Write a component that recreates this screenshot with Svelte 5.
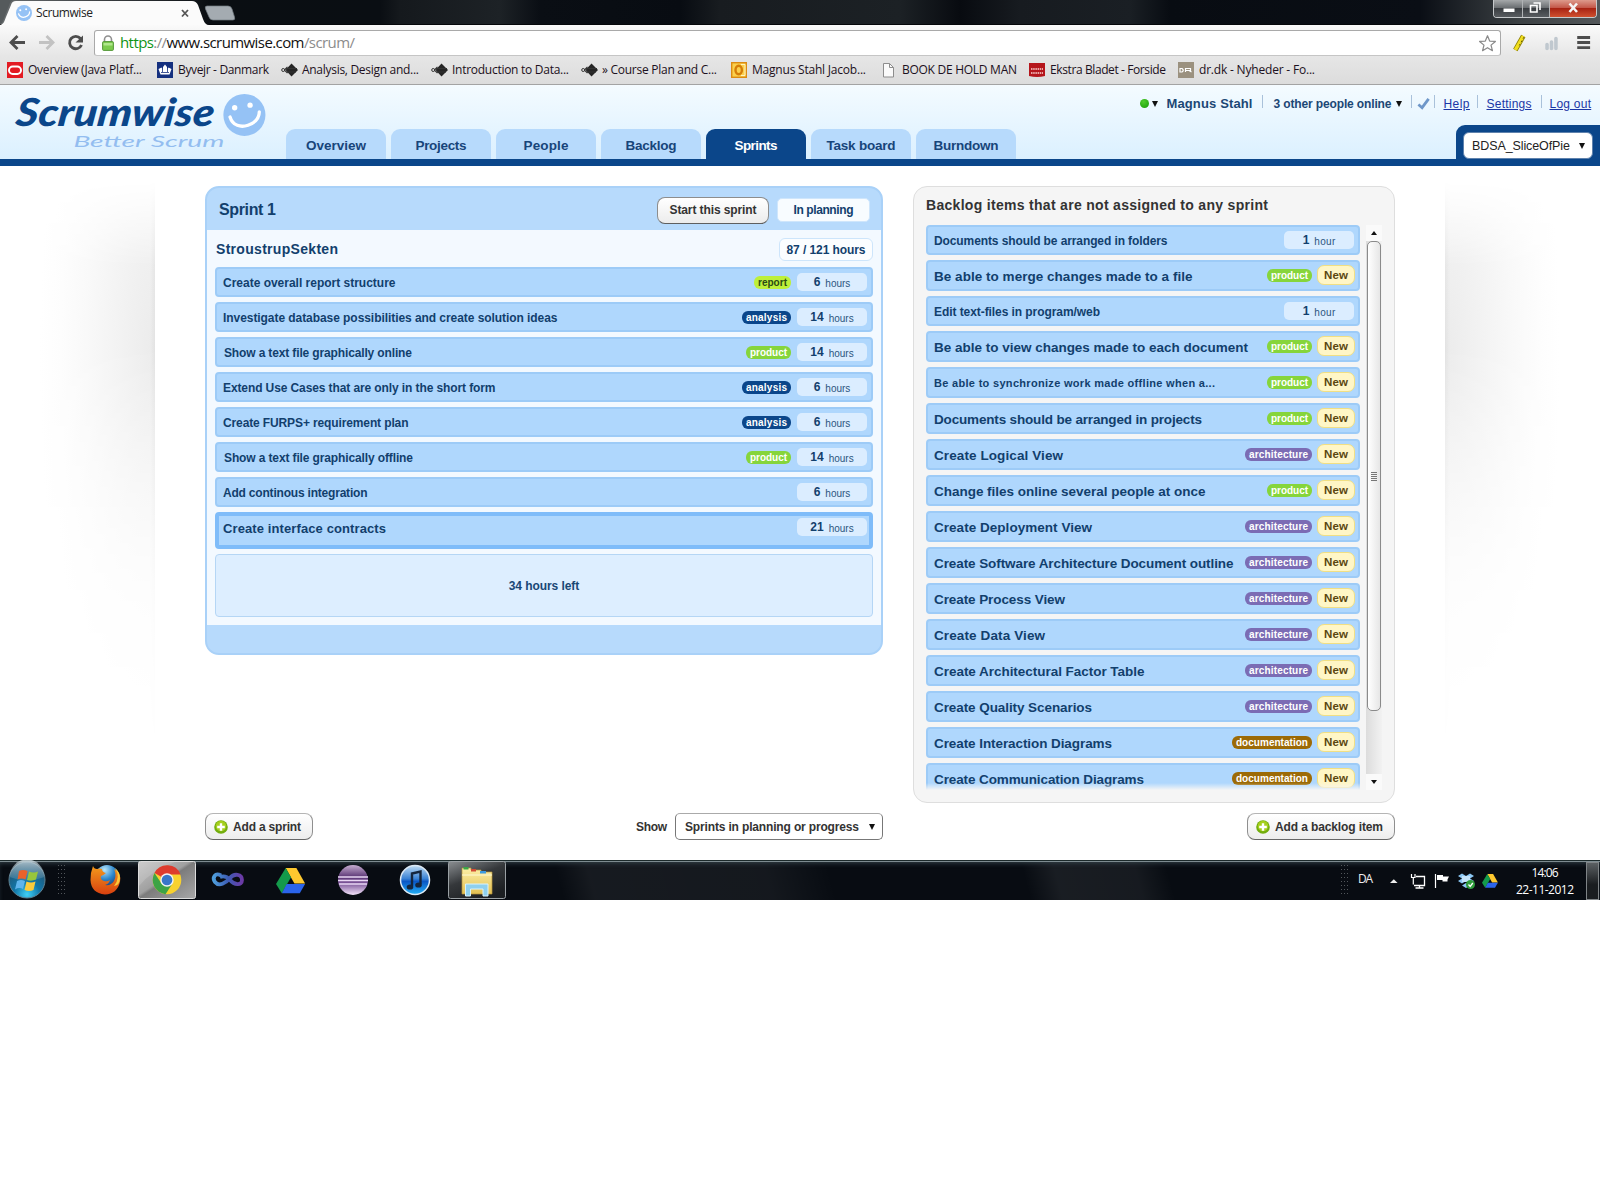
<script>
  // Spreads the letters of a label so that it fills the given width.
  function fit(node, width) {
    const natural = node.getBoundingClientRect().width;
    const gaps = Math.max(1, node.textContent.length - 1);
    const spacing = (width - natural) / gaps;
    node.style.letterSpacing = spacing.toFixed(3) + 'px';
    node.style.marginRight = (-spacing).toFixed(3) + 'px';
  }

  const bookmarks = [
    { icon: 'oracle', label: 'Overview (Java Platf...', w: 114, cell: 150 },
    { icon: 'crown', label: 'Byvejr - Danmark', w: 91, cell: 124 },
    { icon: 'diamond', label: 'Analysis, Design and...', w: 117, cell: 150 },
    { icon: 'diamond', label: 'Introduction to Data...', w: 117, cell: 150 },
    { icon: 'diamond', label: '» Course Plan and C...', w: 115, cell: 150 },
    { icon: 'outlook', label: 'Magnus Stahl Jacob...', w: 114, cell: 150 },
    { icon: 'page', label: 'BOOK DE HOLD MAN', w: 115, cell: 148 },
    { icon: 'ekstra', label: 'Ekstra Bladet - Forside', w: 116, cell: 149 },
    { icon: 'dr', label: 'dr.dk - Nyheder - Fo...', w: 116, cell: 150 }
  ];

  const tabs = [
    { label: 'Overview', w: 60 },
    { label: 'Projects', w: 51 },
    { label: 'People', w: 45 },
    { label: 'Backlog', w: 51 },
    { label: 'Sprints', w: 43, active: true },
    { label: 'Task board', w: 69 },
    { label: 'Burndown', w: 65 }
  ];

  const sprintItems = [
    { title: 'Create overall report structure', w: 172.5, tag: 'report', hours: 6 },
    { title: 'Investigate database possibilities and create solution ideas', w: 334.5, tag: 'analysis', hours: 14 },
    { title: 'Show a text file graphically online', w: 188, tag: 'product', hours: 14, inset: true },
    { title: 'Extend Use Cases that are only in the short form', w: 272.5, tag: 'analysis', hours: 6 },
    { title: 'Create FURPS+ requirement plan', w: 185.5, tag: 'analysis', hours: 6 },
    { title: 'Show a text file graphically offline', w: 189, tag: 'product', hours: 14, inset: true },
    { title: 'Add continous integration', w: 144.5, hours: 6 },
    { title: 'Create interface contracts', w: 163, hours: 21, selected: true }
  ];

  const backlog = [
    { title: 'Documents should be arranged in folders', w: 233.5, hours: 1 },
    { title: 'Be able to merge changes made to a file', w: 258.5, tag: 'product' },
    { title: 'Edit text-files in program/web', w: 166, hours: 1 },
    { title: 'Be able to view changes made to each document', w: 314, tag: 'product' },
    { title: 'Be able to synchronize work made offline when a...', w: 281, tag: 'product', small: true },
    { title: 'Documents should be arranged in projects', w: 268, tag: 'product' },
    { title: 'Create Logical View', w: 129, tag: 'architecture' },
    { title: 'Change files online several people at once', w: 271.5, tag: 'product' },
    { title: 'Create Deployment View', w: 158, tag: 'architecture' },
    { title: 'Create Software Architecture Document outline', w: 299.5, tag: 'architecture' },
    { title: 'Create Process View', w: 131, tag: 'architecture' },
    { title: 'Create Data View', w: 111, tag: 'architecture' },
    { title: 'Create Architectural Factor Table', w: 210.5, tag: 'architecture' },
    { title: 'Create Quality Scenarios', w: 158, tag: 'architecture' },
    { title: 'Create Interaction Diagrams', w: 178, tag: 'documentation' },
    { title: 'Create Communication Diagrams', w: 210, tag: 'documentation' }
  ];

  const tagWidth = { report: 29, analysis: 41, product: 37, architecture: 59, documentation: 72 };
</script>

{#snippet smile()}
  <circle cx="20.5" cy="20.5" r="20.5" fill="#95c2f5" />
  <circle cx="11" cy="13.5" r="2.6" fill="#fff" />
  <circle cx="26" cy="11" r="2.6" fill="#fff" />
  <path d="M6.500 22.500C9 31 17 33 24 30.500C31 28 35 24 35 17.500" fill="none" stroke="#fff" stroke-width="3.200" stroke-linecap="round" />
{/snippet}

{#snippet drive()}
  <path d="M10 1h11l9 16H19z" fill="#fdc82f" />
  <path d="M10 1l5.500 9.500L6 27 0 17.500z" fill="#149a4b" />
  <path d="M11 17.500h19L24.500 27H6z" fill="#2b64ea" />
{/snippet}

{#snippet plus()}
  <svg class="plus" viewBox="0 0 14 14">
    <circle cx="7" cy="7" r="6.800" fill="#72ad0e" />
    <circle cx="7" cy="6" r="5.300" fill="#a5cf1c" />
    <path d="M7 3.200v7.600M3.200 7h7.600" stroke="#fff" stroke-width="2.400" />
  </svg>
{/snippet}

{#snippet hours(n)}
  <span class="hours"><b>{n}</b><span use:fit={n === 1 ? 21 : 25}>{n === 1 ? 'hour' : 'hours'}</span></span>
{/snippet}

{#snippet tag(name)}
  <span class="tag {name}"><span use:fit={tagWidth[name]}>{name}</span></span>
{/snippet}

<div class="screen">
  <div class="titlebar">
    <svg class="tabshape" viewBox="0 0 240 25">
      <path d="M0 0H16C10 0 10 3 8 8L3 21Q2 24 0 24Z" fill="#555a5c" />
      <path d="M0 25C4 24 4 22 6 17L11 5Q12 1 16 1H192Q196 1 198 5L203 19Q205 25 209 25Z" fill="#fbfbfb" />
      <path d="M207 6H228Q231 6 232 9L234.500 17Q235.500 20 233 20H213Q210 20 209 17L205.500 9Q204.500 6 207 6Z" fill="#a4abb1" stroke="#737b82" stroke-width=".7" />
      <g transform="translate(16 5) scale(.39)">{@render smile()}</g>
      <path d="M182 10l6 6.500M188 10l-6 6.500" stroke="#555" stroke-width="1.800" />
    </svg>
    <span class="tabtitle"><span use:fit={57}>Scrumwise</span></span>
    <div class="winbuttons">
      <span class="wb min"><svg viewBox="0 0 28 17"><rect x="9.500" y="8.500" width="11" height="3.500" fill="#fff" /></svg></span>
      <span class="wb max"><svg viewBox="0 0 26 17"><path d="M10.500 3h6.500v7M7.500 5.500h6.500v6.500H7.500z" fill="none" stroke="#fff" stroke-width="1.600" /></svg></span>
      <span class="wb close"><svg viewBox="0 0 46 17"><path d="M19.500 3.500l7.500 8.500M27 3.500l-7.500 8.500" stroke="#f4f4f4" stroke-width="2.600" /></svg></span>
    </div>
  </div>

  <div class="toolbar">
    <svg class="nav" viewBox="0 0 94 32">
      <g fill="none" stroke-width="2.800">
        <path d="M25 17.500H11.500M17.500 11l-6.500 6.500 6.500 6.500" stroke="#4d4d4d" />
        <path d="M39 17.500H52.500M46.500 11l6.500 6.500-6.500 6.500" stroke="#c2c2c2" />
        <path d="M80.500 13.500A6.200 6.200 0 1 0 81.500 20" stroke="#4d4d4d" />
      </g>
      <path d="M83 10.500v7h-7.500z" fill="#4d4d4d" />
    </svg>
    <div class="url">
      <svg class="lock" viewBox="0 0 12 16">
        <path d="M2.500 8V4.500a3.500 3.500 0 0 1 7 0V8" fill="none" stroke="#8f8f8f" stroke-width="1.600" />
        <rect x=".6" y="6.600" width="10.800" height="8.800" rx="1" fill="#7ccb4e" stroke="#55973a" />
        <path d="M1.500 8h9v2.500h-9z" fill="#b1e68d" />
      </svg>
      <span class="address" use:fit={235}><i class="scheme">https</i><i class="dim">://</i>www.scrumwise.com<i class="dim">/scrum/</i></span>
      <svg class="star" viewBox="0 0 20 20"><path d="M10 1.800l2.300 5.600 6 .4-4.600 3.900 1.500 5.900L10 14.400l-5.200 3.200 1.500-5.900L1.700 7.800l6-.4z" fill="#fff" stroke="#8a8a8a" stroke-width="1.300" stroke-linejoin="round" /></svg>
    </div>
    <svg class="ext" viewBox="0 0 100 32">
      <path d="M22.500 11L14.500 25" stroke="#8a7c00" stroke-width="5" />
      <path d="M22.500 11L14.500 25" stroke="#f2df1f" stroke-width="3.400" />
      <path d="M23.300 12L18.500 20.500" stroke="#5e5708" stroke-width="1" stroke-dasharray="2 2" />
      <path d="M46.500 23.500v-4M51 23.500v-6.500M55.500 23.500v-10" stroke="#c0c8cf" stroke-width="3.600" stroke-linecap="round" />
      <path d="M77 12.500h13M77 17.600h13M77 22.700h13" stroke="#4d4d4d" stroke-width="3" />
    </svg>
  </div>

  <div class="bookmarks">
    {#each bookmarks as b}
      <div class="bookmark" style:width="{b.cell}px">
        <svg viewBox="0 0 16 16">
          {#if b.icon === 'oracle'}
            <rect width="16" height="16" fill="#e31b23" /><rect x="2" y="4.500" width="12" height="7.500" rx="3.700" fill="none" stroke="#fff" stroke-width="2" />
          {:else if b.icon === 'crown'}
            <rect width="16" height="16" fill="#15307f" /><path d="M3.500 12.500L1.500 7l3-1.500L6 8V5l2-2.500L10 5v3l1.500-2.500 3 1.500-2 5.500z" fill="#fff" /><path d="M4 10.500h8M5.500 7v3M10.500 7v3" stroke="#15307f" stroke-width=".8" />
          {:else if b.icon === 'diamond'}
            <path d="M10.500 1.500L17 8l-6.500 6.500L4.500 8z" fill="#252525" /><circle cx="2.200" cy="8" r="1.500" fill="none" stroke="#333" /><path d="M3.500 8l3-3.200M3.500 8l3 3.200M5 6.500h11M6 10h9" stroke="#333" stroke-width="1.200" />
          {:else if b.icon === 'outlook'}
            <rect x=".7" y=".7" width="14.600" height="14.600" fill="#fbd04c" stroke="#dc8b12" stroke-width="1.400" /><path d="M10 2.500h4v11h-4" fill="none" stroke="#fff3c0" /><ellipse cx="7.700" cy="8" rx="3.200" ry="4.200" fill="none" stroke="#d57d09" stroke-width="2.400" />
          {:else if b.icon === 'page'}
            <path d="M2.500 1.500h6l4 4v9.500h-10z" fill="#fafafa" stroke="#8d8d8d" /><path d="M8.500 1.500v4h4" fill="none" stroke="#8d8d8d" />
          {:else if b.icon === 'ekstra'}
            <path d="M0 1h16v13Q8 16 0 14z" fill="#b5161c" /><path d="M2 7h12M2 11h12" stroke="#eaa6a6" stroke-width="2" stroke-dasharray="1.500 .7" />
          {:else}
            <rect width="16" height="16" fill="#9b917f" /><path d="M2 6.500h2q2.500 1.700 0 3.500H2zM7.500 10V6.500h5v2h-5M11 8.500l2.500 1.500" fill="none" stroke="#fff" stroke-width="1.200" />
          {/if}
        </svg>
        <span use:fit={b.w}>{b.label}</span>
      </div>
    {/each}
  </div>

  <header>
    <svg class="logo" viewBox="0 0 280 75">
      <text class="brand" transform="translate(12.500 42) skewX(-7)" textLength="201" lengthAdjust="spacingAndGlyphs">Scrumwise</text>
      <text class="tagline" x="72" y="63" textLength="153" lengthAdjust="spacingAndGlyphs">Better Scrum</text>
      <g transform="translate(224 9) scale(1.040)">{@render smile()}</g>
    </svg>
    <nav>
      {#each tabs as t}
        <a class="tab" class:active={t.active}><span use:fit={t.w}>{t.label}</span></a>
      {/each}
    </nav>
    <div class="account">
      <div class="links">
        <i class="dot"></i><i class="caret"></i>
        <b class="user"><span use:fit={86}>Magnus Stahl</span></b>
        <i class="sep s1"></i>
        <b class="online"><span use:fit={118}>3 other people online</span></b>
        <i class="caret c2"></i>
        <i class="sep s2"></i>
        <svg class="check" viewBox="0 0 14 14"><path d="M1.500 8l4 3.500L12.500 2" fill="none" stroke="#6f97c9" stroke-width="3" /></svg>
        <i class="sep s3"></i>
        <u class="help"><span use:fit={26}>Help</span></u>
        <i class="sep s4"></i>
        <u class="settings"><span use:fit={45}>Settings</span></u>
        <i class="sep s5"></i>
        <u><span use:fit={41.5}>Log out</span></u>
      </div>
      <div class="project"><div class="projectbox"><span use:fit={98}>BDSA_SliceOfPie</span><i class="caret"></i></div></div>
    </div>
  </header>

  <main>
    <div class="shade left"></div>
    <div class="content">
      <div class="column sprintcol">
        <section class="sprint">
          <div class="sprinthead">
            <h2><span use:fit={57}>Sprint 1</span></h2>
            <button class="start"><span use:fit={87}>Start this sprint</span></button>
            <span class="status"><span use:fit={60}>In planning</span></span>
          </div>
          <div class="sprintbody">
            <div class="team">
              <h3><span use:fit={122}>StroustrupSekten</span></h3>
              <span class="total"><span use:fit={79}>87 / 121 hours</span></span>
            </div>
            {#each sprintItems as it}
              <div class="item" class:selected={it.selected} class:inset={it.inset}>
                <span class="title"><span use:fit={it.w}>{it.title}</span></span>
                {#if it.tag}{@render tag(it.tag)}{/if}
                {@render hours(it.hours)}
              </div>
            {/each}
            <div class="remaining"><span use:fit={70.5}>34 hours left</span></div>
          </div>
          <div class="sprintfoot"></div>
        </section>
        <div class="actions">
          <button class="add">{@render plus()}<span use:fit={68}>Add a sprint</span></button>
          <span class="show"><span use:fit={31}>Show</span></span>
          <div class="select"><span use:fit={174}>Sprints in planning or progress</span><i class="caret"></i></div>
        </div>
      </div>

      <div class="column backlogcol">
        <section class="backlog">
          <h3><span use:fit={342}>Backlog items that are not assigned to any sprint</span></h3>
          <div class="scroller">
            <div class="list">
              {#each backlog as it}
                <div class="item" class:fresh={!it.hours} class:small={it.small}>
                  <span class="title"><span use:fit={it.w}>{it.title}</span></span>
                  {#if it.tag}{@render tag(it.tag)}{/if}
                  {#if it.hours}{@render hours(it.hours)}{:else}<span class="new"><span use:fit={24}>New</span></span>{/if}
                </div>
              {/each}
              <div class="fade"></div>
            </div>
            <div class="scrollbar">
              <span class="arrow"><i class="up"></i></span>
              <span class="track"><span class="thumb"><i></i><i></i><i></i><i></i><i></i></span></span>
              <span class="arrow"><i class="caret"></i></span>
            </div>
          </div>
        </section>
        <div class="actions end">
          <button class="add">{@render plus()}<span use:fit={108}>Add a backlog item</span></button>
        </div>
      </div>
    </div>
    <div class="shade right"></div>
  </main>

  <footer>
    <svg class="apps" viewBox="0 0 520 40">
      <defs>
        <radialGradient id="orb" cx=".5" cy=".9" r=".8"><stop offset="0" stop-color="#3fd0f5" /><stop offset=".45" stop-color="#1176a8" /><stop offset="1" stop-color="#24536f" /></radialGradient>
        <linearGradient id="shine" x2="0" y2="1"><stop offset="0" stop-color="#d5e2e8" stop-opacity=".8" /><stop offset="1" stop-color="#9fc0d0" stop-opacity=".15" /></linearGradient>
        <linearGradient id="btn" x2="1" y2="1"><stop offset="0" stop-color="#c4c4c4" /><stop offset=".45" stop-color="#a0a0a0" /><stop offset=".5" stop-color="#7c7c7c" /><stop offset="1" stop-color="#a8a8a8" /></linearGradient>
        <linearGradient id="btn2" x2=".6" y2="1"><stop offset="0" stop-color="#8b8f92" /><stop offset=".5" stop-color="#35383b" /><stop offset="1" stop-color="#1c1f22" /></linearGradient>
        <linearGradient id="fox" x2="0" y2="1"><stop offset="0" stop-color="#f39a1c" /><stop offset="1" stop-color="#d8400f" /></linearGradient>
        <radialGradient id="globe" cx=".4" cy=".2" r=".8"><stop offset="0" stop-color="#b7e6fb" /><stop offset=".5" stop-color="#2b86cb" /><stop offset="1" stop-color="#12316f" /></radialGradient>
        <linearGradient id="inf"><stop offset="0" stop-color="#4e9ddb" /><stop offset=".5" stop-color="#3c5cb4" /><stop offset="1" stop-color="#6b3aa5" /></linearGradient>
        <linearGradient id="ecl" x2="0" y2="1"><stop offset="0" stop-color="#c6add0" /><stop offset=".4" stop-color="#5b3675" /><stop offset=".6" stop-color="#7b5498" /><stop offset="1" stop-color="#f3e4fa" /></linearGradient>
        <linearGradient id="tunes" x2="0" y2="1"><stop offset="0" stop-color="#bfdcf3" /><stop offset=".45" stop-color="#3b83d5" /><stop offset=".55" stop-color="#0a57c6" /><stop offset="1" stop-color="#23b0f5" /></linearGradient>
        <linearGradient id="folder" x2="0" y2="1"><stop offset="0" stop-color="#fdf0a8" /><stop offset="1" stop-color="#e3c052" /></linearGradient>
      </defs>
      <circle cx="27" cy="20" r="18" fill="url(#orb)" stroke="#5f8292" />
      <path d="M9.500 17A17.500 17.500 0 0 1 44.500 17Q27 24 9.500 17Z" fill="url(#shine)" />
      <path d="M19 11q4-2 8.500 0l-2 8.500q-4-2-8 0z" fill="#e9622a" />
      <path d="M29 11.500q4.500 2 9 0l-2 8q-4.500 2-9 .5z" fill="#97c63c" />
      <path d="M17 21q4-2 8 0l-2 8q-4-2-8 .5z" fill="#5fb4ec" />
      <path d="M26.500 21.500q4.500 2 9 0l-2 8.500q-4.500 2-9 0z" fill="#fbcb3b" />
      <path d="M58.500 5v30M61.500 5v30M64.500 5v30" stroke="#51565a" stroke-dasharray="1 3" />

      <circle cx="107" cy="17" r="12" fill="url(#globe)" />
      <path d="M93 6q1 3 4 3 3-1 5 0 0 3 4 4-2 2-5 3-1 4 3 5 3 1 6-1-1 4-5 5 6 1 9-4 3-6 0-12 8 5 6 13Q117 34 105 34.500 91 33 90.500 20 90.500 12 93 6Z" fill="url(#fox)" />
      <path d="M115 8q6 9-1 18 6-1 6-8 0-6-5-10z" fill="#fbc93a" />

      <rect x="138.500" y="1.500" width="57" height="37" rx="2" fill="url(#btn)" stroke="#dcdcdc" />
      <path d="M139 26Q152 10 175 2H139z" fill="#fff" opacity=".15" />
      <circle cx="167" cy="20" r="14.300" fill="#f8d12f" />
      <path d="M167 20L154.500 13A14.300 14.300 0 0 1 180.500 14.500H167z" fill="#dd3b2e" />
      <path d="M154.500 13A14.300 14.300 0 0 0 165.500 34.200L172.500 23.500 161.500 23.500z" fill="#3da345" />
      <circle cx="167" cy="20" r="6.700" fill="#f3f3f3" /><circle cx="167" cy="20" r="5.300" fill="#3876c8" />

      <path d="M221 15.500C215 12 212 18 215 22C219 27 226 23 230 18C234 13 242 14 242 20C242 26 234 25 230 20Q226 15 220 17" fill="none" stroke="url(#inf)" stroke-width="3.800" />

      <g transform="translate(276 7) scale(.97)">{@render drive()}</g>

      <circle cx="353" cy="20" r="15" fill="url(#ecl)" /><path d="M338 17h30M338 20.500h30M339 24h28" stroke="#e9d8f3" stroke-width="1.300" />

      <circle cx="415" cy="20" r="14.500" fill="url(#tunes)" stroke="#dce9f4" stroke-width="1.500" />
      <path d="M412 26V13.500l8.500-2V24" fill="none" stroke="#15253c" stroke-width="2.400" /><ellipse cx="410" cy="27" rx="3.300" ry="2.600" fill="#15253c" /><ellipse cx="418.500" cy="25" rx="3.300" ry="2.600" fill="#15253c" />

      <rect x="448.500" y="1.500" width="57" height="37" rx="2" fill="url(#btn2)" stroke="#9aa0a4" />
      <path d="M462 11V8h9v2h10v2h11v22h-30z" fill="url(#folder)" stroke="#b4923a" stroke-width=".7" />
      <rect x="463.500" y="7" width="5" height="2.500" fill="#3aa648" /><rect x="471" y="9" width="5" height="2.500" fill="#d24b35" /><rect x="480" y="11" width="6" height="2.500" fill="#3d9be0" />
      <path d="M462 15h30" stroke="#fff9d4" />
      <path d="M465.500 36V24h22.500v12h-5v-7h-12.500v7z" fill="#8fd0ee" stroke="#d9f3fd" />
    </svg>
    <div class="tray">
      <svg class="trayicons" viewBox="0 0 160 40">
        <path d="M1.500 5v30M4.500 5v30M7.500 5v30" stroke="#51565a" stroke-dasharray="1 3" />
        <path d="M50 23l3.800-3.800L57.600 23z" fill="#eee" />
        <path d="M76 16.500h8.500v9h-10.500M79.500 26v2M75.500 28h8" fill="none" stroke="#fff" stroke-width="1.300" />
        <path d="M71.500 14v3.500h3.500V14M73.300 17.500v7" fill="none" stroke="#fff" stroke-width="1.200" />
        <path d="M95.500 14v14" stroke="#fff" stroke-width="1.200" /><path d="M97 15h6v1.500h6l-1.500 3v2h-5V20H97z" fill="#fff" />
        <path d="M122 13.500l4 2.500-4 2.500-4-2.500zM130 13.500l4 2.500-4 2.500-4-2.500zM122 18.500l4 2.500-4 2.500-4-2.500zM130 18.500l4 2.500-4 2.500-4-2.500zM126 23l4 2.500-4 2.500-4-2.500z" fill="#8cc8f5" />
        <path d="M122 16h8v6h-8z" fill="#c4e4fb" />
        <circle cx="130.500" cy="24.500" r="4.500" fill="#2f9e3c" /><path d="M128.500 24.500l1.700 2 2.600-3.500" fill="none" stroke="#fff" stroke-width="1.300" />
        <g transform="translate(142 13.500) scale(.53)">{@render drive()}</g>
      </svg>
      <span class="lang"><span use:fit={15}>DA</span></span>
      <div class="clock"><span use:fit={27}>14:06</span><span use:fit={58}>22-11-2012</span></div>
      <div class="desktop"></div>
    </div>
  </footer>
</div>

<style>
  :global(body) { background: #fff; }
  .screen { width: 1600px; height: 1195px; overflow: hidden; background: #fff; font-family: "Liberation Sans", Arial, sans-serif; font-size: 12px; color: #123f6d; }
  .screen * { box-sizing: border-box; }
  .screen :global(svg) { display: block; flex: none; }
  span, b, u { white-space: nowrap; }
  i { font-style: normal; flex: none; }
  h2, h3 { margin: 0; }
  button { font-family: inherit; }
  .caret { width: 0; height: 0; border: 3.500px solid transparent; border-top: 6px solid #111; border-bottom: 0; }

  .titlebar { height: 25px; display: flex; border-bottom: 1px solid #05070a; background: linear-gradient(90deg, #6a6e70 0, #0a0e12 210px, #0a0e13 380px, #15191d 400px, #1d2226 500px, #0a0e14 540px, #080c12 680px, #181c20 720px, #1c2125 900px, #080b10 960px, #171b20 1020px, #1a1f24 1130px, #080c12 1170px, #0a0e15 1420px, #3c4144 1520px, #53575a); }
  .tabshape { width: 240px; height: 25px; }
  .tabtitle { width: 60px; margin-left: -204px; font: 12px/26px "Open Sans", sans-serif; color: #222; }
  .winbuttons { margin-left: auto; margin-right: 3px; width: 104px; height: 18px; display: flex; border: 1px solid #c6c9cb; border-top: 0; border-radius: 0 0 4px 4px; overflow: hidden; }
  .wb { height: 17px; border-right: 1px solid #b0b3b5; background: linear-gradient(#a5a8aa, #6b6f72 45%, #3a3e42 50%, #585c60); }
  .wb svg { height: 17px; width: 100%; }
  .min { width: 29px; }
  .max { width: 27px; }
  .close { flex: 1; border: 0; background: linear-gradient(#dd9a8c, #c4584a 45%, #a82313 50%, #d0502f); }

  .toolbar { height: 31px; display: flex; background: linear-gradient(#fafafa, #e6e6e6); }
  .nav { width: 94px; height: 32px; }
  .url { width: 1407px; height: 26px; margin-top: 5px; display: flex; align-items: center; background: #fff; border: 1px solid #a9a9a9; border-bottom-color: #c5c5c5; border-radius: 3px; padding: 0 3px 0 7px; }
  .lock { width: 12px; height: 16px; margin-right: 6px; }
  .address { font: 15px/20px "Open Sans", sans-serif; color: #111; padding-bottom: 2px; }
  .scheme { color: #0f9416; }
  .dim { color: #8c8c8c; }
  .star { width: 19px; height: 19px; margin-left: auto; }
  .ext { width: 99px; height: 32px; }

  .bookmarks { height: 29px; display: flex; padding: 0 0 0 7px; background: linear-gradient(#e6e6e6, #dcdcdc); border-bottom: 1px solid #a3a3a3; }
  .bookmark { display: flex; align-items: center; flex: none; }
  .bookmark svg { width: 16px; height: 16px; margin-right: 5px; overflow: visible; }
  .bookmark span { font: 12px/28px "Open Sans", sans-serif; color: #1c1020; }

  header { height: 81px; display: flex; align-items: flex-end; border-bottom: 7px solid #0b468a; background: linear-gradient(#f4fbff, #dbf0ff); }
  .logo { width: 286px; height: 74px; padding-right: 5px; }
  .brand { font: italic 900 39px Lato, sans-serif; fill: #0b468a; }
  .tagline { font: italic 400 15px Lato, sans-serif; fill: #93bdf0; }
  nav { display: flex; gap: 5px; }
  .tab { width: 100px; height: 30px; border-radius: 9px 9px 0 0; background: #b7dafc; display: flex; justify-content: center; font: bold 13.500px/33px "Liberation Sans", Arial, sans-serif; color: #17457a; }
  .tab.active { background: #0b468a; color: #fff; }
  .account { margin-left: auto; height: 74px; display: flex; flex-direction: column; justify-content: space-between; align-items: flex-end; }
  .links { height: 37px; display: flex; align-items: center; color: #1c4775; font-size: 12px; padding-right: 9px; }
  .dot { width: 9px; height: 9px; border-radius: 50%; background: radial-gradient(circle at 40% 30%, #4ecb2c, #159b07); margin-right: 3px; }
  .user { font-size: 13px; margin-left: 8px; }
  .online { font-size: 12px; }
  .sep { width: 1px; height: 13px; background: #a9c1da; margin-top: -4px; }
  .s1 { margin: -4px 10px 0; }
  .c2 { margin: 0 9px 0 5px; }
  .check { width: 13px; height: 13px; margin: 0 4px 0 5px; }
  .s3 { margin-right: 8px; }
  .s4 { margin: -4px 8px 0 8px; }
  .s5 { margin: -4px 8px 0 9px; }
  u { color: #1b36a5; }
  .project { width: 144px; height: 34px; background: #0b468a; border-radius: 9px 0 0 0; padding: 7px; }
  .projectbox { width: 130px; height: 27px; background: #fff; border: 1px solid #5f82ad; border-radius: 6px; display: flex; align-items: center; gap: 9px; padding-left: 8px; color: #222; font-size: 12.500px; }

  main { height: 694px; display: flex; justify-content: space-between; }
  .shade { width: 155px; mask-image: linear-gradient(#0000 15px, #000 100px, #000 180px, #0008 330px, #0003 440px, #0000 600px); }
  .left { background: linear-gradient(270deg, rgba(0,0,0,.04), transparent 5px), radial-gradient(ellipse 115px 480px at 155px 190px, #ebebeb, #f2f2f2 30%, #f9f9f9 60%, #fdfdfd 82%, #fff); }
  .right { background: linear-gradient(90deg, rgba(0,0,0,.04), transparent 5px), radial-gradient(ellipse 115px 480px at 0 190px, #ebebeb, #f2f2f2 30%, #f9f9f9 60%, #fdfdfd 82%, #fff); }
  .content { width: 1190px; padding-top: 20px; display: flex; justify-content: space-between; }
  .column { height: 654px; display: flex; flex-direction: column; justify-content: space-between; }
  .sprintcol { width: 678px; }
  .backlogcol { width: 482px; }

  .sprint { height: 469px; border: 2px solid #a9d1f8; border-radius: 14px; overflow: hidden; background: #b7dafc; display: flex; flex-direction: column; }
  .sprinthead { height: 42px; display: flex; align-items: center; padding: 3px 11px 1px 12px; }
  h2 { font-size: 16px; line-height: 20px; margin-top: -1px; flex: 1; }
  .start { width: 112px; height: 27px; border: 1px solid #8d8d8d; border-bottom-color: #5f5f5f; border-radius: 8px; background: linear-gradient(#fff, #ececec); color: #333; font-weight: bold; font-size: 12px; padding: 0; }
  .status { width: 93px; height: 24px; margin-left: 8px; border-radius: 5px; background: #f8fcff; border: 1px solid #cfe6fc; font: bold 12px/23px "Liberation Sans", Arial, sans-serif; text-align: center; }
  .sprintbody { height: 395px; background: #f3f9ff; padding: 8px 8px 0; display: flex; flex-direction: column; gap: 5px; }
  .team { height: 24px; display: flex; justify-content: space-between; }
  .team h3 { font-size: 14px; line-height: 15px; padding: 4px 0 0 1px; }
  .total { width: 94px; height: 23px; border: 1px solid #cde5fb; border-radius: 6px; background: #fbfdff; font: bold 12px/22px "Liberation Sans", Arial, sans-serif; text-align: center; }

  .item { height: 30px; flex: none; background: #afd7fd; border: 2px solid #9dcbf7; border-radius: 4px; display: flex; align-items: flex-start; padding: 4px 4px 0 6px; }
  .title { flex: 1; font: bold 12px/18px "Liberation Sans", Arial, sans-serif; padding-top: 1px; }
  .inset { padding-left: 7px; }
  .selected { height: 37px; border: 4px solid #7fbcf9; padding: 2px 2px 0 4px; }
  .selected .title { font-size: 13px; padding-top: 2px; }
  .hours { width: 70px; height: 18px; margin-left: 6px; border-radius: 5px; background: #dbedff; display: flex; justify-content: center; gap: 5px; font-size: 10px; line-height: 21px; color: #2c5580; }
  .hours b { font-size: 12px; line-height: 19px; color: #123f6d; }
  .tag { height: 13px; margin-top: 3px; padding: 0 4px; border-radius: 6px; font: bold 10px/13px "Liberation Sans", Arial, sans-serif; color: #fff; }
  .report { background: #bdf03a; color: #2b4a14; }
  .analysis { background: #0b468a; }
  .product { background: #86d53b; }
  .architecture { background: #7b6cb4; }
  .documentation { background: #9c6a06; }
  .remaining { height: 63px; border: 1px solid #b5d6f5; border-radius: 4px; background: #ddeeff; display: flex; align-items: center; justify-content: center; font-weight: bold; color: #194775; }

  .actions { height: 27px; display: flex; align-items: center; }
  .end { justify-content: flex-end; }
  .add { height: 27px; display: flex; align-items: center; gap: 5px; padding: 0 11px 0 8px; border: 1px solid #8f8f8f; border-top-color: #b5b5b5; border-bottom-color: #666; border-radius: 8px; background: linear-gradient(#fff, #ededed); font-weight: bold; font-size: 12px; color: #333; }
  .add :global(.plus) { width: 14px; height: 14px; }
  .show { margin-left: auto; margin-right: 8px; font-weight: bold; color: #333; }
  .select { width: 208px; height: 27px; display: flex; align-items: center; justify-content: space-between; padding: 0 7px 0 9px; border: 1px solid #777; border-top-color: #aaa; border-radius: 5px; background: #fff; font-weight: bold; color: #333; }

  .backlog { height: 617px; border: 1px solid #dedede; border-radius: 14px; background: #f5f5f5; padding: 10px 12px 0; }
  .backlog h3 { height: 28px; font-size: 14px; line-height: 17px; color: #333; }
  .scroller { height: 565px; display: flex; justify-content: space-between; margin-right: -1px; }
  .list { width: 434px; height: 565px; overflow: hidden; display: flex; flex-direction: column; gap: 5px; position: relative; }
  .fresh { height: 31px; padding-top: 3px; }
  .fresh .title { font-size: 13.500px; padding-top: 3px; }
  .fresh.small .title { font-size: 11px; padding-top: 2px; }
  .fresh .tag { margin-top: 4px; }
  .new { width: 38px; height: 20px; margin: 0 -1px 0 5px; border: 1px solid #f1df83; border-radius: 7px; background: #fff6c6; color: #5b4711; font: bold 11.500px/19px "Liberation Sans", Arial, sans-serif; text-align: center; }
  .fade { position: absolute; left: 0; right: 0; bottom: 0; height: 7px; background: linear-gradient(rgba(245,245,245,0), #f5f5f5); }
  .scrollbar { width: 16px; margin-right: 1px; display: flex; flex-direction: column; background: #ececec; }
  .arrow { height: 16px; background: #fafafa; display: flex; align-items: center; justify-content: center; }
  .arrow .caret { border-width: 4px 3px 0; }
  .up { width: 0; height: 0; border: 3px solid transparent; border-top: 0; border-bottom: 4px solid #111; }
  .track { flex: 1; background: linear-gradient(90deg, #dcdcdc, #f2f2f2); }
  .thumb { width: 14px; height: 470px; margin-left: 1px; border: 1px solid #8a8a8a; border-radius: 5px; background: linear-gradient(90deg, #fff, #e6e6e6); display: flex; flex-direction: column; align-items: center; justify-content: center; gap: 1px; }
  .thumb i { width: 6px; height: 1px; background: #777; }

  footer { height: 40px; display: flex; justify-content: space-between; border-top: 1px solid #1c2a2b; box-shadow: inset 0 1px #7d8b90, inset 0 4px 5px -2px #34434a; background: linear-gradient(75deg, transparent 35%, rgba(255,255,255,.06) 37%, rgba(255,255,255,.05) 48%, transparent 52%, transparent 64%, rgba(255,255,255,.07) 66%, rgba(255,255,255,.06) 71%, transparent 73%), #080c12; }
  .apps { width: 520px; height: 40px; margin-top: -1px; }
  .tray { display: flex; }
  .trayicons { width: 160px; height: 40px; margin-top: -1px; }
  .lang { width: 15px; margin-left: -142px; font: 12px/36px "Open Sans", sans-serif; color: #eee; }
  .clock { width: 82px; margin-left: 131px; padding-top: 3px; display: flex; flex-direction: column; align-items: center; font: 12px/17px "Open Sans", sans-serif; color: #fff; }
  .desktop { width: 13px; height: 38px; margin: 1px 1px 0 0; border: 1px solid #7f8487; background: linear-gradient(#5b6063, #1a1d20 60%); }
</style>
